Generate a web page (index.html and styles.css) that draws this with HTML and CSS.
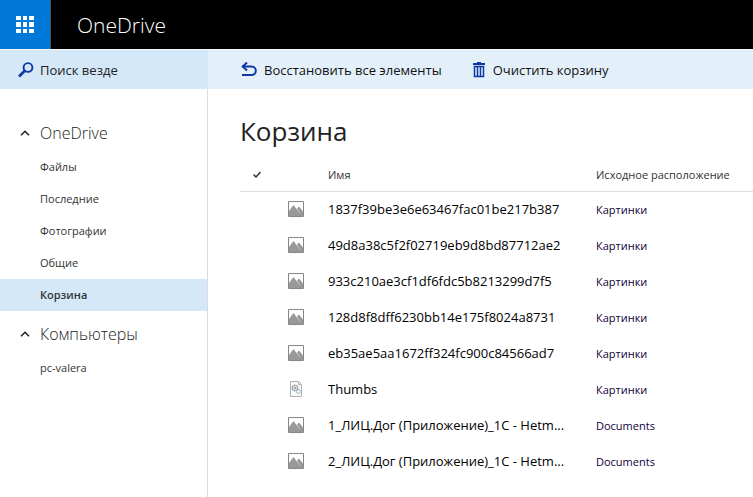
FILE: index.html
```html
<!DOCTYPE html>
<html lang="ru">
<head>
    <meta charset="UTF-8">
    <meta name="viewport" content="width=device-width, initial-scale=1.0">
    <title>Корзина - OneDrive</title>
    <link rel="stylesheet" href="styles.css">
</head>
<body>
    <!-- Shared icons -->
    <svg class="sprite" width="0" height="0" aria-hidden="true">
        <symbol id="icon-image" viewBox="0 0 16 16">
            <path d="M.5 .5h15v15H.5z" fill="#fff" stroke="#868686"/>
            <path d="M1 10L5.500 4 12 12.500V15H1z" fill="#999"/>
            <path d="M9 7.500L11 5.500l4 5V15h-1.500z" fill="#999"/>
            <path d="M1 12.500h14V15H1z" fill="#999"/>
        </symbol>
        <symbol id="icon-file" viewBox="0 0 16 16">
            <path d="M2.500 .5h8l3 3v12h-11z" fill="#fafafa" stroke="#b0b0b0"/>
            <path d="M10.500 .5v3h3" fill="none" stroke="#b0b0b0"/>
            <circle cx="7" cy="7" r="2.800" fill="none" stroke="#777" stroke-width="1.200" stroke-dasharray="1.300 .6"/>
            <circle cx="7" cy="7" r="1" fill="none" stroke="#777" stroke-width=".8"/>
            <circle cx="10.500" cy="10.500" r="1.800" fill="#fff" stroke="#7fb0d0" stroke-width="1.200" stroke-dasharray="1.200 .5"/>
        </symbol>
        <symbol id="icon-chevron" viewBox="0 0 10 6">
            <path d="M1 5.300L5 1.300l4 4" fill="none" stroke="#222" stroke-width="1.600"/>
        </symbol>
    </svg>

    <header class="topbar">
        <button class="launcher" aria-label="Приложения">
            <svg width="18" height="18" viewBox="0 0 18 18" fill="#fff">
                <path d="M0 0h5v4H0zM7 0h4v4H7zM13 0h5v4h-5zM0 6h5v5H0zM7 6h4v5H7zM13 6h5v5h-5zM0 13h5v4H0zM7 13h4v4H7zM13 13h5v4h-5z"/>
            </svg>
        </button>
        <a class="brand" href="#">OneDrive</a>
    </header>

    <div class="toolbar">
        <label class="search">
            <svg width="16" height="16" viewBox="0 0 16 16" fill="none" stroke="#0f37a0">
                <circle cx="10" cy="5.500" r="4.400" stroke-width="1.900"/>
                <path d="M7 8.500L1 14.500" stroke-width="2.600"/>
            </svg>
            <input type="text" placeholder="Поиск везде" aria-label="Поиск везде">
        </label>
        <div class="commands">
            <button class="command">
                <svg width="16" height="16" viewBox="0 0 16 16" fill="none" stroke="#0f37a0" stroke-width="2">
                    <path d="M1 4.500h9.500a4.300 4.300 0 0 1 0 8.600H1"/>
                    <path d="M6 .5L1.800 4.500 6 8.500"/>
                </svg>
                Восстановить все элементы
            </button>
            <button class="command">
                <svg width="14" height="16" viewBox="0 0 14 16" fill="none" stroke="#0f37a0">
                    <path d="M1 2h12" stroke-width="2"/>
                    <path d="M5 .5h4"/>
                    <path d="M2.500 4.500h9v10h-9zM5.500 5v9M8.500 5v9" stroke-width="1.500"/>
                </svg>
                Очистить корзину
            </button>
        </div>
    </div>

    <div class="layout">
        <nav class="sidebar">
            <h2 class="group">
                <svg width="10" height="6"><use href="#icon-chevron"/></svg>
                OneDrive
            </h2>
            <ul class="links">
                <li><a href="#">Файлы</a></li>
                <li><a href="#">Последние</a></li>
                <li><a href="#">Фотографии</a></li>
                <li><a href="#">Общие</a></li>
                <li><a href="#" class="active">Корзина</a></li>
            </ul>
            <h2 class="group">
                <svg width="10" height="6"><use href="#icon-chevron"/></svg>
                Компьютеры
            </h2>
            <ul class="links">
                <li><a href="#">pc-valera</a></li>
            </ul>
        </nav>

        <main class="content">
            <h1>Корзина</h1>
            <table class="files">
                <colgroup>
                    <col class="col-check">
                    <col class="col-icon">
                    <col class="col-name">
                    <col>
                </colgroup>
                <thead>
                    <tr>
                        <th class="check">
                            <svg width="8" height="7" viewBox="0 0 8 7"><path d="M.5 3.500L3 6 7.500 1" fill="none" stroke="#333" stroke-width="1.500"/></svg>
                        </th>
                        <th></th>
                        <th>Имя</th>
                        <th>Исходное расположение</th>
                    </tr>
                </thead>
                <tbody>
                    <tr>
                        <td></td>
                        <td><svg width="16" height="16"><use href="#icon-image"/></svg></td>
                        <td class="name">1837f39be3e6e63467fac01be217b387</td>
                        <td><a href="#">Картинки</a></td>
                    </tr>
                    <tr>
                        <td></td>
                        <td><svg width="16" height="16"><use href="#icon-image"/></svg></td>
                        <td class="name">49d8a38c5f2f02719eb9d8bd87712ae2</td>
                        <td><a href="#">Картинки</a></td>
                    </tr>
                    <tr>
                        <td></td>
                        <td><svg width="16" height="16"><use href="#icon-image"/></svg></td>
                        <td class="name">933c210ae3cf1df6fdc5b8213299d7f5</td>
                        <td><a href="#">Картинки</a></td>
                    </tr>
                    <tr>
                        <td></td>
                        <td><svg width="16" height="16"><use href="#icon-image"/></svg></td>
                        <td class="name">128d8f8dff6230bb14e175f8024a8731</td>
                        <td><a href="#">Картинки</a></td>
                    </tr>
                    <tr>
                        <td></td>
                        <td><svg width="16" height="16"><use href="#icon-image"/></svg></td>
                        <td class="name">eb35ae5aa1672ff324fc900c84566ad7</td>
                        <td><a href="#">Картинки</a></td>
                    </tr>
                    <tr>
                        <td></td>
                        <td><svg width="16" height="16"><use href="#icon-file"/></svg></td>
                        <td class="name">Thumbs</td>
                        <td><a href="#">Картинки</a></td>
                    </tr>
                    <tr>
                        <td></td>
                        <td><svg width="16" height="16"><use href="#icon-image"/></svg></td>
                        <td class="name">1_ЛИЦ.Дог (Приложение)_1С - Hetm...</td>
                        <td><a href="#">Documents</a></td>
                    </tr>
                    <tr>
                        <td></td>
                        <td><svg width="16" height="16"><use href="#icon-image"/></svg></td>
                        <td class="name">2_ЛИЦ.Дог (Приложение)_1С - Hetm...</td>
                        <td><a href="#">Documents</a></td>
                    </tr>
                </tbody>
            </table>
        </main>
    </div>
</body>
</html>
```

FILE: styles.css
```css
* {
    box-sizing: border-box;
}

body {
    margin: 0;
    min-height: 100vh;
    display: flex;
    flex-direction: column;
    background-color: #fff;
    color: #000;
    font-family: "Open Sans", "Noto Sans", sans-serif;
    font-size: 13px;
}

a {
    color: inherit;
    text-decoration: none;
}

button,
input {
    font: inherit;
    color: inherit;
    border: none;
    padding: 0;
    background: none;
}

button {
    cursor: pointer;
}

svg {
    display: block;
    flex: none;
}

.sprite {
    position: absolute;
}

/* Header */
.topbar {
    display: flex;
    align-items: center;
    height: 49px;
    background-color: #000;
    color: #fff;
}

.launcher {
    display: flex;
    align-items: center;
    justify-content: center;
    width: 51px;
    height: 100%;
    background-color: #0078d7;
    border-right: 1px solid #505050;
}

.brand {
    margin-left: 26px;
    font-size: 21px;
    font-weight: 300;
}

/* Search and commands */
.toolbar {
    display: flex;
    height: 40px;
    border-top: 1px solid #f4f9fd;
    background-color: #e3f0fa;
}

.search {
    display: flex;
    align-items: center;
    gap: 6px;
    width: 208px;
    padding-left: 18px;
    background-color: #d5e8f8;
}

.search input {
    flex: 1;
    min-width: 0;
    outline: none;
}

.search input::placeholder {
    color: #222;
    opacity: 1;
}

.commands {
    display: flex;
    gap: 30px;
    padding-left: 33px;
}

.command {
    display: flex;
    align-items: center;
    gap: 7px;
    color: #111;
    white-space: nowrap;
}

/* Sidebar */
.layout {
    display: flex;
    flex: 1;
}

.sidebar {
    width: 208px;
    padding-top: 26px;
    border-right: 1px solid #dcdcdc;
    color: #333;
}

.group {
    display: flex;
    align-items: center;
    gap: 10px;
    height: 36px;
    margin: 0;
    padding-left: 20px;
    color: #222;
    font-size: 16px;
    font-weight: 300;
}

.links {
    margin: 0 0 5px;
    padding: 0;
    list-style: none;
    font-size: 11px;
}

.links a {
    display: block;
    padding-left: 40px;
    line-height: 32px;
}

.links .active {
    background-color: #d5e8f8;
    font-weight: 600;
}

/* File list */
.content {
    flex: 1;
    min-width: 0;
    padding: 24px 0 0 32px;
}

h1 {
    margin: 0 0 10px;
    font-size: 26px;
    font-weight: 400;
    line-height: 36px;
    color: #222;
}

.files {
    width: 100%;
    table-layout: fixed;
    border-collapse: collapse;
}

.col-check {
    width: 48px;
}

.col-icon {
    width: 40px;
}

.col-name {
    width: 268px;
}

.files th,
.files td {
    padding: 0;
    text-align: left;
    font-size: 11px;
    font-weight: 400;
    white-space: nowrap;
}

.files th {
    height: 32px;
    border-bottom: 1px solid #dcdcdc;
    color: #333;
}

.files th.check {
    padding-left: 13px;
}

.files td {
    height: 36px;
}

.files td a {
    color: #10003a;
}

.files td.name {
    font-size: 13px;
}
```
